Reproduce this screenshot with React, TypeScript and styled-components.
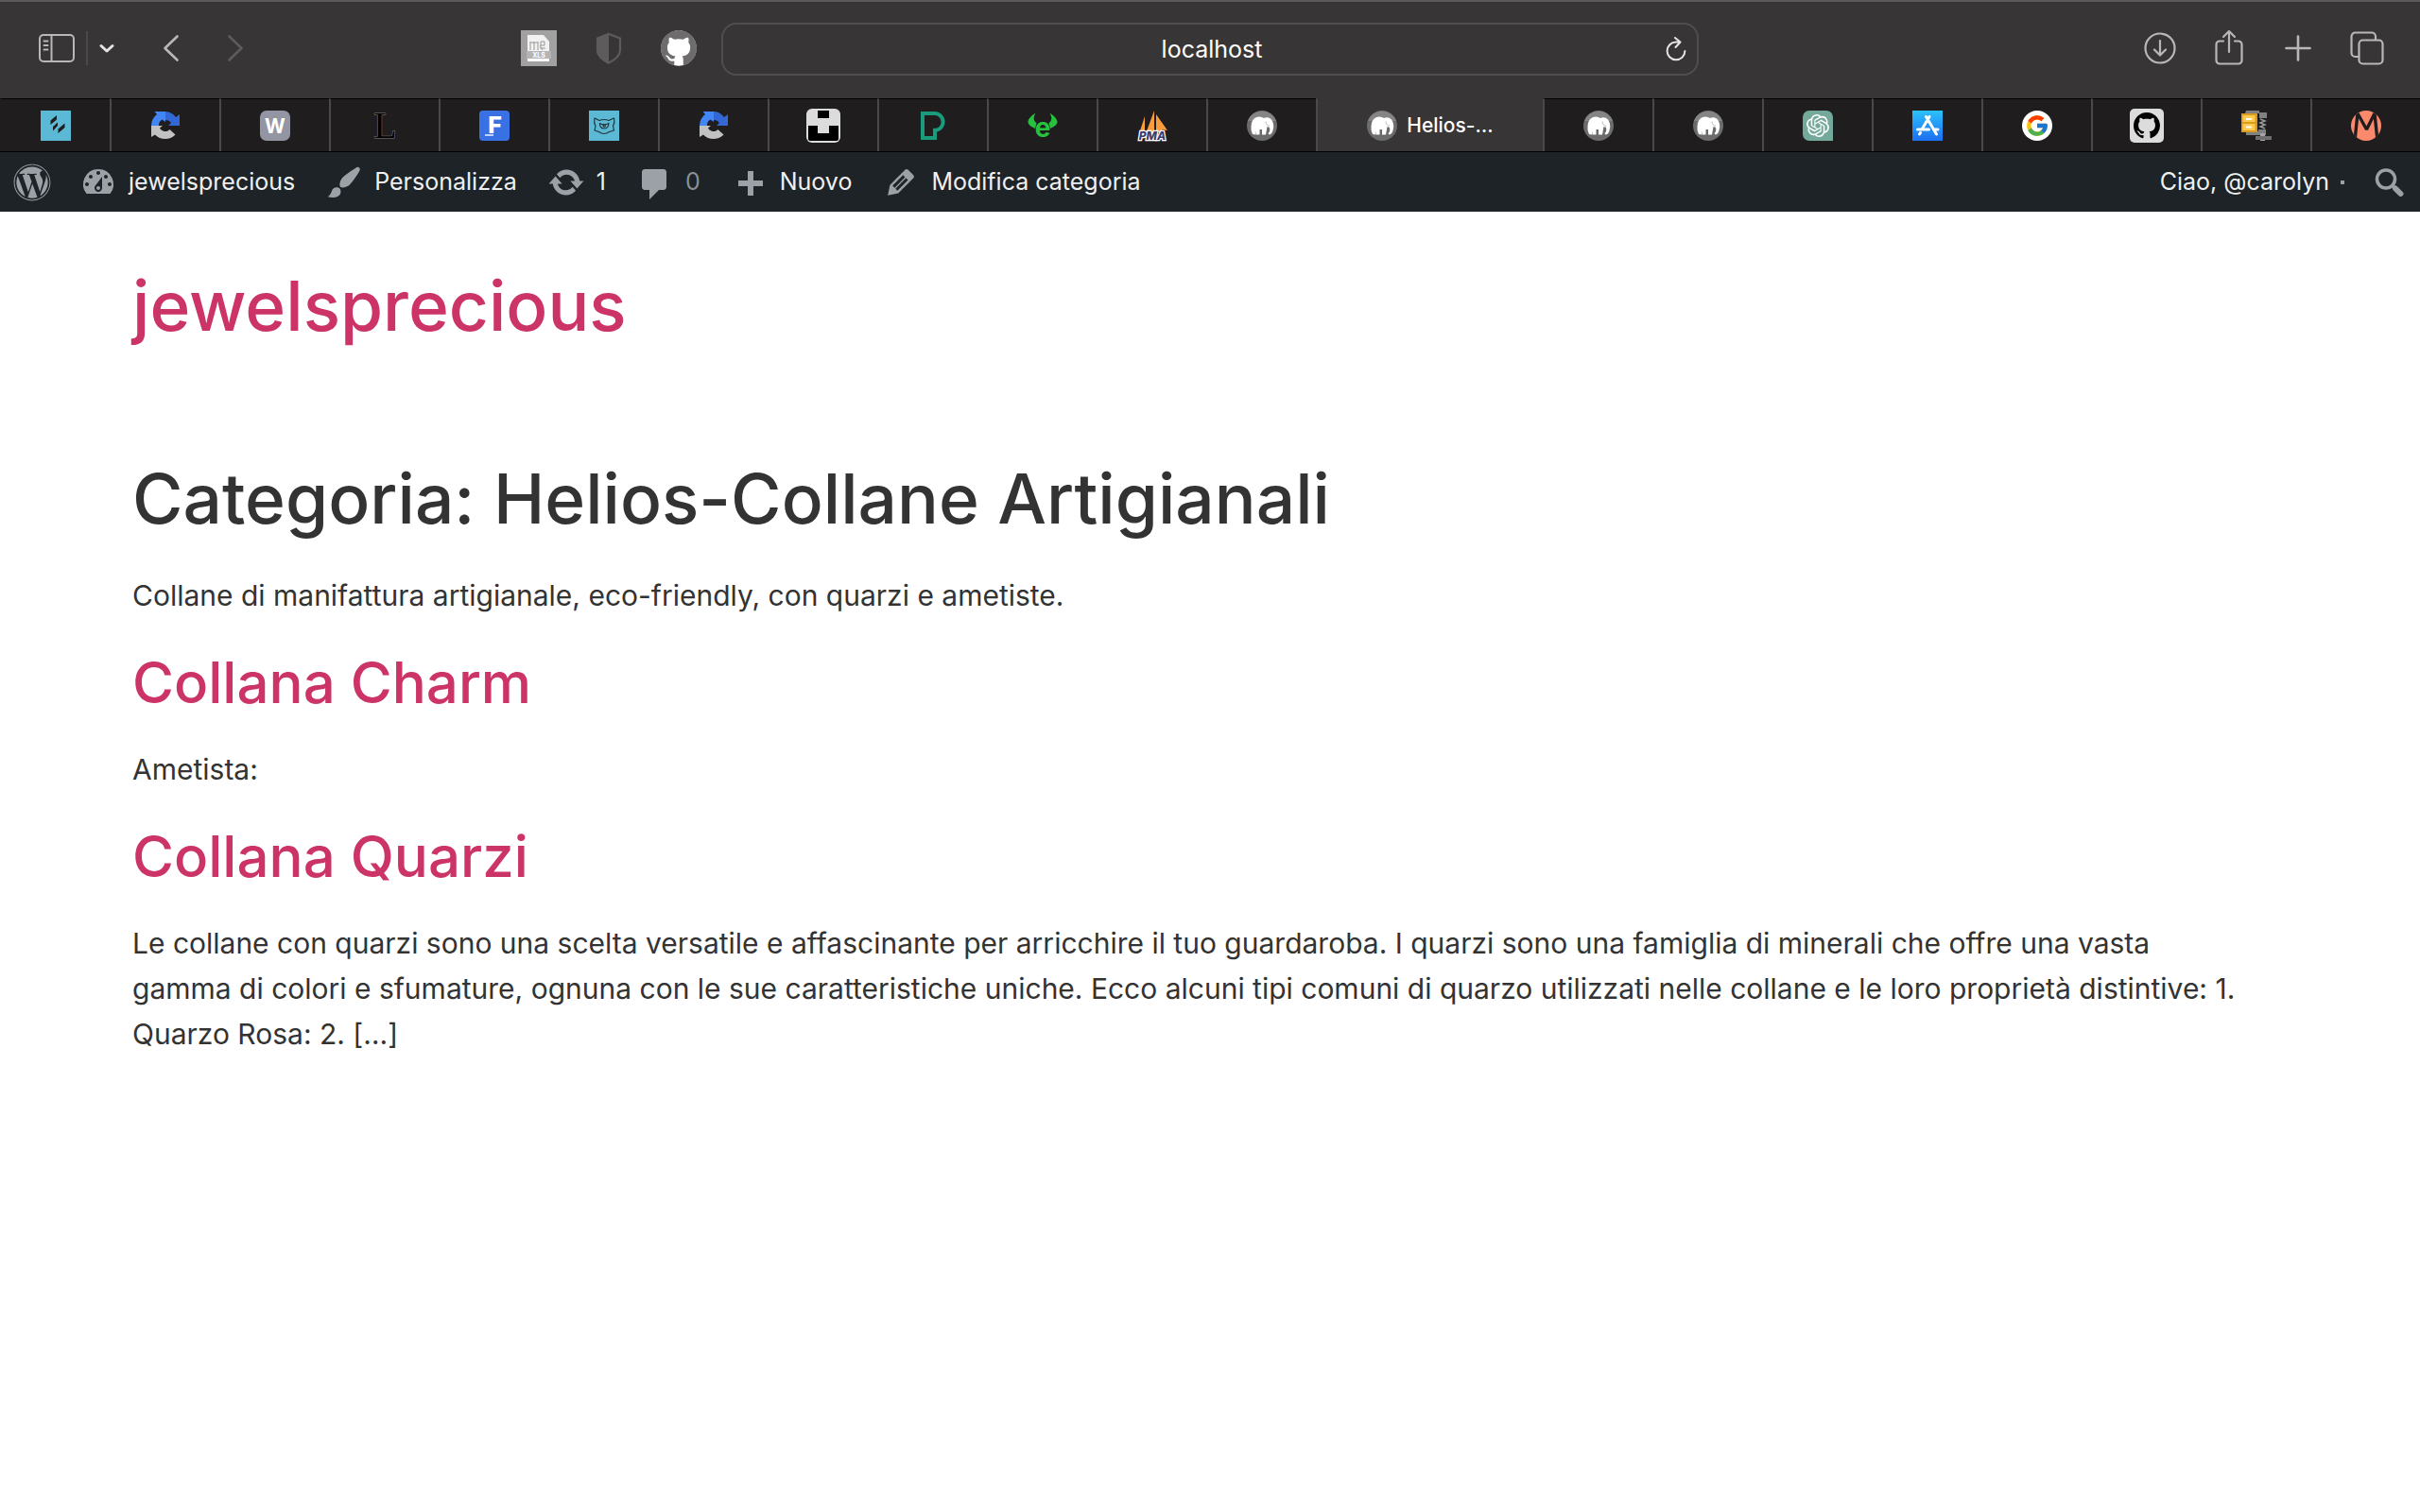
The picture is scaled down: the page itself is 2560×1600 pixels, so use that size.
import React from "react";
import styled, { createGlobalStyle } from "styled-components";
import { SiOpenai } from "react-icons/si";
import { FcGoogle } from "react-icons/fc";
import { FaWordpress } from "react-icons/fa";

const GlobalStyle = createGlobalStyle`
  *, *::before, *::after { box-sizing: border-box; }
  body {
    margin: 0;
    background: #fff;
    color: #333;
    font-family: Inter, "Liberation Sans", sans-serif;
    font-size: 30px;
    line-height: 48px;
  }
  button, input { font: inherit; color: inherit; }
  a { color: inherit; text-decoration: none; }
  svg { display: block; flex: none; overflow: visible; }
`;

/* ---------- browser toolbar ---------- */

const Toolbar = styled.header`
  display: grid;
  grid-template-columns: 763fr 1034fr 763fr;
  align-items: center;
  height: 104px;
  padding-bottom: 2px;
  background: #383536;
  border-top: 2px solid #5b595a;
  color: #b9b7b8;
`;

const ToolbarSide = styled.div<{ $end?: boolean }>`
  display: flex;
  align-items: center;
  justify-content: ${(p) => (p.$end ? "flex-end" : "space-between")};
  gap: 35px;
  min-width: 0;
  padding: ${(p) => (p.$end ? "0 37px 2px 0" : "0 26px 2px 41px")};
`;

const Cluster = styled.div<{ $gap: number }>`
  display: flex;
  align-items: center;
  gap: ${(p) => p.$gap}px;
`;

const IconButton = styled.button<{ $tone?: string }>`
  display: flex;
  align-items: center;
  justify-content: center;
  min-width: 16px;
  height: 40px;
  padding: 0;
  border: 0;
  background: none;
  color: ${(p) => p.$tone ?? "inherit"};
`;

const WideIconButton = styled(IconButton)`
  min-width: 38px;
`;

const Divider = styled.span`
  width: 2px;
  height: 36px;
  background: #4b494a;
`;

const AddressBar = styled.form`
  display: flex;
  align-items: center;
  height: 56px;
  padding: 0 10px;
  border: 2px solid #504e4f;
  border-radius: 16px;
  color: #fff;
`;

const AddressInput = styled.input`
  flex: 1;
  min-width: 0;
  height: 40px;
  padding: 0 0 0 28px;
  border: 0;
  outline: 0;
  background: none;
  font-size: 25px;
  text-align: center;
`;

/* ---------- tab strip ---------- */

const TabStrip = styled.nav`
  display: flex;
  height: 57px;
  background: #1f1d1e;
  border-bottom: 1px solid #000;
`;

const Tab = styled.button<{ $active?: boolean }>`
  display: flex;
  align-items: center;
  justify-content: center;
  gap: 10px;
  flex: ${(p) => (p.$active ? "0 0 240px" : "1 1 0")};
  min-width: 0;
  padding: 0;
  border: 0;
  border-left: 2px solid #4b494a;
  border-top: 1px solid ${(p) => (p.$active ? "#383536" : "#000")};
  background: ${(p) => (p.$active ? "#383536" : "none")};
  color: #fff;
  font-size: 21px;
  line-height: 32px;
  font-weight: 500;

  &:first-child { border-left-color: transparent; }
`;

/* ---------- admin bar ---------- */

const AdminBar = styled.nav`
  display: flex;
  justify-content: space-between;
  height: 63px;
  background: #1d2327;
  color: #f0f0f1;
  font-size: 25px;
  line-height: 63px;
`;

const AdminGroup = styled.div`
  display: flex;
`;

const AdminItem = styled.a<{ $tight?: boolean; $dim?: boolean }>`
  display: flex;
  align-items: center;
  gap: 12px;
  padding: 0 ${(p) => (p.$tight ? 14 : 16)}px;
  color: ${(p) => (p.$dim ? "#8a8f94" : "inherit")};
  white-space: nowrap;

  svg { color: #9ca1a7; }
`;

const AvatarDot = styled.span`
  width: 4px;
  height: 4px;
  background: #9ca1a7;
`;

/* ---------- page ---------- */

const Container = styled.div`
  max-width: 2280px;
  margin: 0 auto;
`;

const SiteHeader = styled.header`
  padding: 52px 0 44px;
`;

const Title = styled.h1`
  margin: 0;
  font-size: 73px;
  line-height: 96px;
  font-weight: 500;
`;

const SiteName = styled(Title).attrs({ as: "p" })`
  color: #cc3366;
`;

const Main = styled.main`
  display: flex;
  flex-direction: column;
  gap: 30px;
  padding-top: 64px;
`;

const Section = styled.section`
  display: flex;
  flex-direction: column;
  gap: 30px;
`;

const EntryTitle = styled.h2`
  margin: 0;
  color: #cc3366;
  font-size: 60px;
  line-height: 76px;
  font-weight: 500;
`;

const Text = styled.p`
  margin: 0;
  white-space: pre-line;
`;

/* ---------- toolbar drawings ---------- */

const line = { fill: "none", stroke: "currentColor", strokeLinecap: "round", strokeLinejoin: "round" } as const;

const SidebarIcon = () => (
  <svg width="38" height="30" viewBox="0 0 38 30" {...line} strokeWidth="2">
    <rect x="1" y="1" width="36" height="28" rx="4" />
    <path d="M13.5 1v28M5.500 7.500h4M5.500 12h4M5.500 16.500h4" />
  </svg>
);
const ChevronDown = () => (
  <svg width="16" height="10" viewBox="0 0 16 10" {...line} strokeWidth="3">
    <path d="M2 2.500 8 8l6-5.500" />
  </svg>
);
const Back = () => (
  <svg width="16" height="28" viewBox="0 0 16 28" {...line} strokeWidth="2.600">
    <path d="M14.500 1.500 1.500 14l13 12.500" />
  </svg>
);
const Forward = () => (
  <svg width="16" height="28" viewBox="0 0 16 28" {...line} strokeWidth="2.600">
    <path d="m1.500 1.500 13 12.500-13 12.500" />
  </svg>
);
const XlsIcon = () => (
  <svg width="38" height="38" viewBox="0 0 38 38">
    <rect width="38" height="38" fill="#a1a1a1" />
    <path d="M7 5h17l6 7v21H7z" fill="#f2f2f2" />
    <path d="M10 13h8M10 12v9M14 12v9M18 12v9M20 16l3 5M20 19h6M21 12h4v4h-4z" stroke="#999" strokeWidth="1" fill="none" />
    <rect x="6" y="22" width="26" height="8" fill="#b5b5b5" />
    <text x="19" y="28.500" fontSize="7" fontWeight="700" textAnchor="middle" fill="#fff">XLS</text>
    <path d="M7 31.500h23" stroke="#fff" strokeWidth="2" />
  </svg>
);
const ShieldIcon = () => (
  <svg width="28" height="34" viewBox="0 0 28 34">
    <path d="M14 2 26 6.500V19c0 6-5 10-12 13.500C7 29 2 25 2 19V6.500z" fill="none" stroke="#5d5b5c" strokeWidth="2.200" />
    <path d="M14 1 1 6v13c0 6 5 11 13 15z" fill="#5d5b5c" />
  </svg>
);

const GITHUB_MARK =
  "M8 0C3.58 0 0 3.58 0 8c0 3.54 2.29 6.53 5.47 7.59.4.07.55-.17.55-.38 0-.19-.01-.82-.01-1.49-2.01.37-2.53-.49-2.69-.94-.09-.23-.48-.94-.82-1.13-.28-.15-.68-.52-.01-.53.63-.01 1.08.58 1.23.82.72 1.21 1.87.87 2.33.66.07-.52.28-.87.51-1.07-1.78-.2-3.64-.89-3.64-3.95 0-.87.31-1.59.82-2.15-.08-.2-.36-1.02.08-2.12 0 0 .67-.21 2.2.82.64-.18 1.32-.27 2-.27.68 0 1.36.09 2 .27 1.53-1.04 2.2-.82 2.2-.82.44 1.1.16 1.92.08 2.12.51.56.82 1.27.82 2.15 0 3.07-1.87 3.75-3.65 3.95.29.25.54.73.54 1.48 0 1.07-.01 1.93-.01 2.2 0 .21.15.46.55.38A8.013 8.013 0 0016 8c0-4.42-3.58-8-8-8z";

const GithubRound = () => (
  <svg width="38" height="38" viewBox="0 0 16 16">
    <circle cx="8" cy="8" r="7.900" fill="#fff" />
    <path d={GITHUB_MARK} fill="#6e6c6d" />
  </svg>
);
const ReloadIcon = () => (
  <svg width="24" height="28" viewBox="0 0 24 28" {...line} strokeWidth="2">
    <path d="M12 6.500A9.400 9.400 0 1 0 21.400 16M11 2l5.500 4.500L11.500 12M12 6.500h4" />
  </svg>
);
const DownloadIcon = () => (
  <svg width="34" height="34" viewBox="0 0 34 34" {...line} strokeWidth="2.200">
    <circle cx="17" cy="17" r="15.500" />
    <path d="M17 9v15M11 18.500l6 6 6-6" />
  </svg>
);
const ShareIcon = () => (
  <svg width="30" height="40" viewBox="0 0 30 40" {...line} strokeWidth="2.200">
    <path d="M9 12.500H5a3.500 3.500 0 0 0-3.500 3.500v17A3.500 3.500 0 0 0 5 36.500h20a3.500 3.500 0 0 0 3.500-3.500V16a3.500 3.500 0 0 0-3.500-3.500h-4M15 24V2M9 8l6-6 6 6" />
  </svg>
);
const NewTabIcon = () => (
  <svg width="28" height="28" viewBox="0 0 28 28" {...line} strokeWidth="2.600">
    <path d="M14 1.500v25M1.500 14h25" />
  </svg>
);
const OverviewIcon = () => (
  <svg width="36" height="36" viewBox="0 0 36 36" {...line} strokeWidth="2.200">
    <rect x="9.500" y="9.500" width="25" height="25" rx="4" />
    <path d="M9 27H5.500a4 4 0 0 1-4-4V5.500a4 4 0 0 1 4-4H23a4 4 0 0 1 4 4V9" />
  </svg>
);

/* ---------- favicons ---------- */

const Favicon = ({ size = 32, children }: { size?: number; children: React.ReactNode }) => (
  <svg width={size} height={size} viewBox={`0 0 ${size} ${size}`}>{children}</svg>
);

const SlashesFav = () => (
  <Favicon>
    <rect width="32" height="32" fill="#5bb9d5" />
    <path d="M10.500 10.500 17 5v4.500L10.500 15zM13 17l5-4.500V16l-5 5.500zM18.500 19.500l7-6V18l-7 6z" fill="#1f1d1e" />
  </Favicon>
);
const CycleFav = () => (
  <Favicon>
    <path d="M1 16A15 15 0 0 1 7 4L4.500 1H16v11l-3.500-2.500A7 7 0 0 0 9 16z" fill="#4285f4" />
    <path d="M16 1a15 15 0 0 1 11 6l4-3v12H19l3-3a7 7 0 0 0-6-3z" fill="#3367d6" />
    <path d="M1 16h12l-3 2.500a6.500 6.500 0 0 0 10.500 1.500l6 5.500A15 15 0 0 1 5 25.500L1 28z" fill="#c2c2c2" />
  </Favicon>
);
const WFav = () => (
  <Favicon>
    <rect width="32" height="32" rx="7" fill="#9495a3" />
    <text x="16" y="24" fontSize="21" fontWeight="700" textAnchor="middle" fill="#fff">W</text>
  </Favicon>
);
const LFav = () => (
  <Favicon>
    <text x="16.500" y="29" fontSize="40" fontFamily="Liberation Serif, serif" textAnchor="middle" fill="#000" stroke="#807e7f" strokeWidth="1" paintOrder="stroke">L</text>
  </Favicon>
);
const FFav = () => (
  <Favicon>
    <rect width="32" height="32" rx="4" fill="#3970e4" />
    <text x="16.500" y="24" fontSize="25" fontWeight="800" textAnchor="middle" fill="#fff">F</text>
    <path d="M6 26h9" stroke="#c3d4fa" strokeWidth="2" />
  </Favicon>
);
const MonsterFav = () => (
  <Favicon>
    <rect width="32" height="32" fill="#5bb9d5" />
    <g fill="none" stroke="#243338" strokeWidth="1.200" strokeLinejoin="round">
      <path d="M6 8l5 2.500Q16 8.500 21 10.500L26.500 8Q27.500 13 25.500 16l1 5-5 1.500Q16 26.500 10.500 22.500L6 21l1-5Q5 13 6 8z" />
      <path d="M11.500 13.500Q16 16 21 13.500 20.500 19 16 19t-4.500-5.500z" />
      <circle cx="16.200" cy="16" r="1.200" />
    </g>
  </Favicon>
);
const BlocksFav = () => (
  <Favicon size={36}>
    <rect width="36" height="36" rx="6" fill="#dcdcdc" />
    <path d="M12 2h12v8H12zM2 18h10v8h12v-8h10v14a2 2 0 0 1-2 2H4a2 2 0 0 1-2-2z" fill="#000" />
  </Favicon>
);
const PexelsFav = () => (
  <Favicon>
    <path d="M5 3h13a9 9 0 0 1 1.500 17.800H18V29H5zM18 21v-2" fill="none" stroke="#1a9c7c" strokeWidth="4" />
  </Favicon>
);
const HornsFav = () => (
  <Favicon>
    <path
      d="M8.500 2.500C6 7 6 11 9.500 13L8 19C4 17 .5 15 .5 12S4 5.500 8.500 2.500zM23.500 2.500c2.500 4.500 2.500 8.500-1 10.500l1.500 6c4-2 7.500-4 7.500-7s-3.500-6.500-8-9.500z"
      fill="#26c23e"
    />
    <text x="16" y="28" fontSize="28" fontWeight="700" textAnchor="middle" fill="#26c23e">e</text>
  </Favicon>
);
const PmaFav = () => (
  <Favicon>
    <path d="M8 6v17H2.500zM18 0v23H9.500zM20 4l12 17-6-1 1 3h-7z" fill="#f89c3c" />
    <text x="16" y="31" fontSize="12" fontWeight="800" fontStyle="italic" textAnchor="middle" fill="#3a3c6e" stroke="#fff" strokeWidth="2.500" paintOrder="stroke">PMA</text>
  </Favicon>
);
const ElephantFav = () => (
  <Favicon>
    <circle cx="16" cy="16" r="16" fill="#6c6c6c" />
    <path d="M1 11a16 16 0 0 1 30 0z" fill="#858585" />
    <path d="M6 25Q3.500 20 5 13 7 6.500 13 6.500q3 0 5 1.500 4.500-2 8 1.500 3 4.500 2 9.500-1 6-4.500 6.500l-1-1.500q2.500-2 1.500-6L21.500 17l-1.500 8.500h-4V20h-2.500v5.500H9.500L9 21v4.500z" fill="#fff" />
    <path d="M20 11.500q.5 5 4 4.500" fill="none" stroke="#bbb" strokeWidth="1" />
  </Favicon>
);
const OpenAiFav = () => (
  <Favicon>
    <path d="M7 0h18a7 7 0 0 1 7 7v25H7a7 7 0 0 1-7-7V7a7 7 0 0 1 7-7z" fill="#74a89b" />
    <SiOpenai x="4" y="4" size={24} color="#fff" />
  </Favicon>
);
const AppStoreFav = () => (
  <Favicon>
    <defs>
      <linearGradient id="store" x1="0" y1="0" x2="0" y2="1">
        <stop offset="0" stopColor="#2cc0fb" />
        <stop offset="1" stopColor="#1d6ff0" />
      </linearGradient>
    </defs>
    <rect width="32" height="32" fill="url(#store)" />
    <path d="M18 6.500 10 20M14.500 6.500 25.500 25M5.500 20h12M22.500 20h4.500M8.500 23.500 7.500 25" stroke="#fff" strokeWidth="3" strokeLinecap="round" fill="none" />
  </Favicon>
);
const GoogleFav = () => (
  <Favicon>
    <circle cx="16" cy="16" r="16" fill="#fff" />
    <FcGoogle x="3" y="3" size={26} />
  </Favicon>
);
const GithubFav = () => (
  <Favicon size={36}>
    <rect width="36" height="36" rx="5" fill="#dcdcdc" />
    <path d={GITHUB_MARK} transform="translate(4 4) scale(1.750)" fill="#000" />
  </Favicon>
);
const ZipFav = () => (
  <Favicon>
    <path d="M5 0h14v2h8v6h-8V3H4zM5 22h13v-2h8v6H5z" fill="#808080" />
    <path d="M20 9l5 2-5 2 5 2-5 2 5 2" stroke="#9a9a9a" strokeWidth="1.500" fill="none" />
    <rect x="20" y="24" width="5" height="8" fill="#a5a5a5" />
    <path d="M15 27h17v4H15z" fill="#6f6f6f" />
    <rect x="0" y="3" width="17" height="20" fill="#d99a1e" />
    <path d="M1.500 5h13v7h-13zM1.500 14h13v7h-13z" fill="#ffc94d" />
    <path d="M5 9h6M5 17.500h6" stroke="#fff" strokeWidth="2" />
  </Favicon>
);
const MFav = () => (
  <Favicon>
    <defs>
      <clipPath id="disc"><circle cx="16" cy="16" r="16" /></clipPath>
    </defs>
    <g clipPath="url(#disc)">
      <rect width="32" height="32" fill="#fb8a6c" />
      <path d="M4 32 7 3 16.500 20 25 3 28 32" fill="none" stroke="#1f1d1e" strokeWidth="3.400" strokeLinejoin="bevel" />
    </g>
  </Favicon>
);

/* ---------- admin bar drawings, on a 20-unit grid ---------- */

const DASH = {
  gauge:
    "M3.76 16h12.480A8 8 0 0 0 10 3a8 8 0 0 0-6.240 13zM10 4c.55 0 1 .45 1 1s-.45 1-1 1-1-.45-1-1 .45-1 1-1zM6 6c.55 0 1 .45 1 1s-.45 1-1 1-1-.45-1-1 .45-1 1-1zm8 0c.55 0 1 .45 1 1s-.45 1-1 1-1-.45-1-1 .45-1 1-1zm-5.370 5.550L12 7v6c0 1.100-.9 2-2 2s-2-.9-2-2c0-.57.24-1.080.63-1.450zM4 10c.55 0 1 .45 1 1s-.45 1-1 1-1-.45-1-1 .45-1 1-1zm12 0c.55 0 1 .45 1 1s-.45 1-1 1-1-.45-1-1 .45-1 1-1zm-5 3c0-.55-.45-1-1-1s-1 .45-1 1 .45 1 1 1 1-.45 1-1z",
  brush:
    "M18.330 3.570s.27-.8-.31-1.360c-.53-.52-1.220-.24-1.220-.24-.61.3-5.760 3.470-7.670 5.570-.86.96-2.060 3.790-1.090 4.820.92.98 3.960-.17 4.790-1 2.060-2.060 5.210-7.170 5.500-7.790zM1.400 17.650c2.370-1.560 1.460-3.410 3.230-4.640.93-.65 2.220-.62 3.080.29.63.67.8 2.570-.16 3.460-1.570 1.450-4 1.550-6.150.89z",
  update:
    "M10.200 3.280c3.530 0 6.430 2.610 6.920 6h2.080l-3.500 4-3.500-4h2.320c-.45-1.970-2.210-3.450-4.320-3.450-1.450 0-2.730.71-3.540 1.780L4.950 5.660C6.230 4.200 8.110 3.280 10.200 3.280zm-.4 13.440c-3.520 0-6.430-2.610-6.920-6H.8l3.500-4 3.500 4H5.480c.45 1.970 2.210 3.450 4.320 3.450 1.450 0 2.730-.71 3.540-1.780l1.710 1.950c-1.280 1.460-3.150 2.380-5.250 2.380z",
  comment: "M4.500 3h10c.83 0 1.500.67 1.500 1.500v8c0 .83-.67 1.500-1.500 1.500H12l-5 5v-5H4.500C3.670 14 3 13.330 3 12.500v-8C3 3.670 3.670 3 4.500 3z",
  plus: "M17 9v3h-5v5H9v-5H4V9h5V4h3v5z",
  pencil:
    "m13.890 3.390 2.710 2.720c.46.46.42 1.240.03 1.640l-8.010 8.020-5.560 1.160 1.160-5.580s7.600-7.630 7.990-8.030c.39-.39 1.220-.39 1.680.07zm-2.730 2.790-5.590 5.610 1.110 1.110 5.540-5.650zm-2.970 8.230 5.580-5.600-1.070-1.080-5.590 5.600z",
};

const Dashicon = ({ name }: { name: keyof typeof DASH }) => (
  <svg width="40" height="40" viewBox="0 0 20 20" fill="currentColor">
    <path d={DASH[name]} />
  </svg>
);
const SearchIcon = () => (
  <svg width="32" height="32" viewBox="0 0 32 32" fill="none" stroke="currentColor">
    <circle cx="12" cy="12.500" r="9.500" strokeWidth="3.500" />
    <path d="M19 19.500l2.500 2.500" strokeWidth="3.500" />
    <path d="M22 22.500l5.500 5.500" strokeWidth="6" strokeLinecap="round" />
  </svg>
);

/* ---------- data ---------- */

const TABS: { name: string; icon: React.ComponentType; label?: string }[] = [
  { name: "Temi", icon: SlashesFav },
  { name: "Ricerca", icon: CycleFav },
  { name: "W", icon: WFav },
  { name: "L", icon: LFav },
  { name: "F", icon: FFav },
  { name: "TemplateMonster", icon: MonsterFav },
  { name: "Ricerca", icon: CycleFav },
  { name: "Unsplash", icon: BlocksFav },
  { name: "Pexels", icon: PexelsFav },
  { name: "Elements", icon: HornsFav },
  { name: "phpMyAdmin", icon: PmaFav },
  { name: "MAMP", icon: ElephantFav },
  { name: "Helios", icon: ElephantFav, label: "Helios-…" },
  { name: "MAMP", icon: ElephantFav },
  { name: "MAMP", icon: ElephantFav },
  { name: "ChatGPT", icon: OpenAiFav },
  { name: "App Store", icon: AppStoreFav },
  { name: "Google", icon: GoogleFav },
  { name: "GitHub", icon: GithubFav },
  { name: "Archivio", icon: ZipFav },
  { name: "M", icon: MFav },
];

const ADMIN_LINKS: { icon: keyof typeof DASH; label: string; dim?: boolean }[] = [
  { icon: "gauge", label: "jewelsprecious" },
  { icon: "brush", label: "Personalizza" },
  { icon: "update", label: "1" },
  { icon: "comment", label: "0", dim: true },
  { icon: "plus", label: "Nuovo" },
  { icon: "pencil", label: "Modifica categoria" },
];

const ENTRIES = [
  { title: "Collana Charm", text: "Ametista:" },
  {
    title: "Collana Quarzi",
    text: `Le collane con quarzi sono una scelta versatile e affascinante per arricchire il tuo guardaroba. I quarzi sono una famiglia di minerali che offre una vasta
gamma di colori e sfumature, ognuna con le sue caratteristiche uniche. Ecco alcuni tipi comuni di quarzo utilizzati nelle collane e le loro proprietà distintive: 1.
Quarzo Rosa: 2. […]`,
  },
];

export default function App() {
  return (
    <>
      <GlobalStyle />
      <Toolbar>
        <ToolbarSide>
          <Cluster $gap={52}>
            <Cluster $gap={12}>
              <IconButton aria-label="Barra laterale"><SidebarIcon /></IconButton>
              <Divider />
              <IconButton aria-label="Gruppi di pannelli" $tone="#e6e5e5"><ChevronDown /></IconButton>
            </Cluster>
            <IconButton aria-label="Indietro"><Back /></IconButton>
            <IconButton aria-label="Avanti" $tone="#5d5b5c"><Forward /></IconButton>
          </Cluster>
          <Cluster $gap={36}>
            <WideIconButton aria-label="Esporta XLS"><XlsIcon /></WideIconButton>
            <WideIconButton aria-label="Privacy"><ShieldIcon /></WideIconButton>
            <WideIconButton aria-label="GitHub"><GithubRound /></WideIconButton>
          </Cluster>
        </ToolbarSide>
        <AddressBar onSubmit={(e) => e.preventDefault()}>
          <AddressInput aria-label="Indirizzo" defaultValue="localhost" />
          <IconButton type="button" aria-label="Ricarica" $tone="#e6e5e5"><ReloadIcon /></IconButton>
        </AddressBar>
        <ToolbarSide $end>
          <WideIconButton aria-label="Download"><DownloadIcon /></WideIconButton>
          <WideIconButton aria-label="Condividi"><ShareIcon /></WideIconButton>
          <WideIconButton aria-label="Nuovo pannello"><NewTabIcon /></WideIconButton>
          <WideIconButton aria-label="Panoramica"><OverviewIcon /></WideIconButton>
        </ToolbarSide>
      </Toolbar>

      <TabStrip aria-label="Pannelli">
        {TABS.map(({ name, icon: Icon, label }, i) => (
          <Tab key={i} $active={!!label} aria-label={label ? undefined : name}>
            <Icon />
            {label}
          </Tab>
        ))}
      </TabStrip>

      <AdminBar aria-label="Amministrazione">
        <AdminGroup>
          <AdminItem href="#wordpress" $tight aria-label="WordPress"><FaWordpress size={40} /></AdminItem>
          {ADMIN_LINKS.map(({ icon, label, dim }) => (
            <AdminItem key={label} href={`#${icon}`} $dim={dim}>
              <Dashicon name={icon} />
              {label}
            </AdminItem>
          ))}
        </AdminGroup>
        <AdminGroup>
          <AdminItem href="#profile">Ciao, @carolyn<AvatarDot /></AdminItem>
          <AdminItem href="#search" aria-label="Cerca"><SearchIcon /></AdminItem>
        </AdminGroup>
      </AdminBar>

      <Container>
        <SiteHeader>
          <SiteName><a href="#home">jewelsprecious</a></SiteName>
        </SiteHeader>
        <Main>
          <Section>
            <Title>Categoria: Helios-Collane Artigianali</Title>
            <Text>Collane di manifattura artigianale, eco-friendly, con quarzi e ametiste.</Text>
          </Section>
          {ENTRIES.map((entry) => (
            <Section key={entry.title}>
              <EntryTitle><a href="#entry">{entry.title}</a></EntryTitle>
              <Text>{entry.text}</Text>
            </Section>
          ))}
        </Main>
      </Container>
    </>
  );
}
